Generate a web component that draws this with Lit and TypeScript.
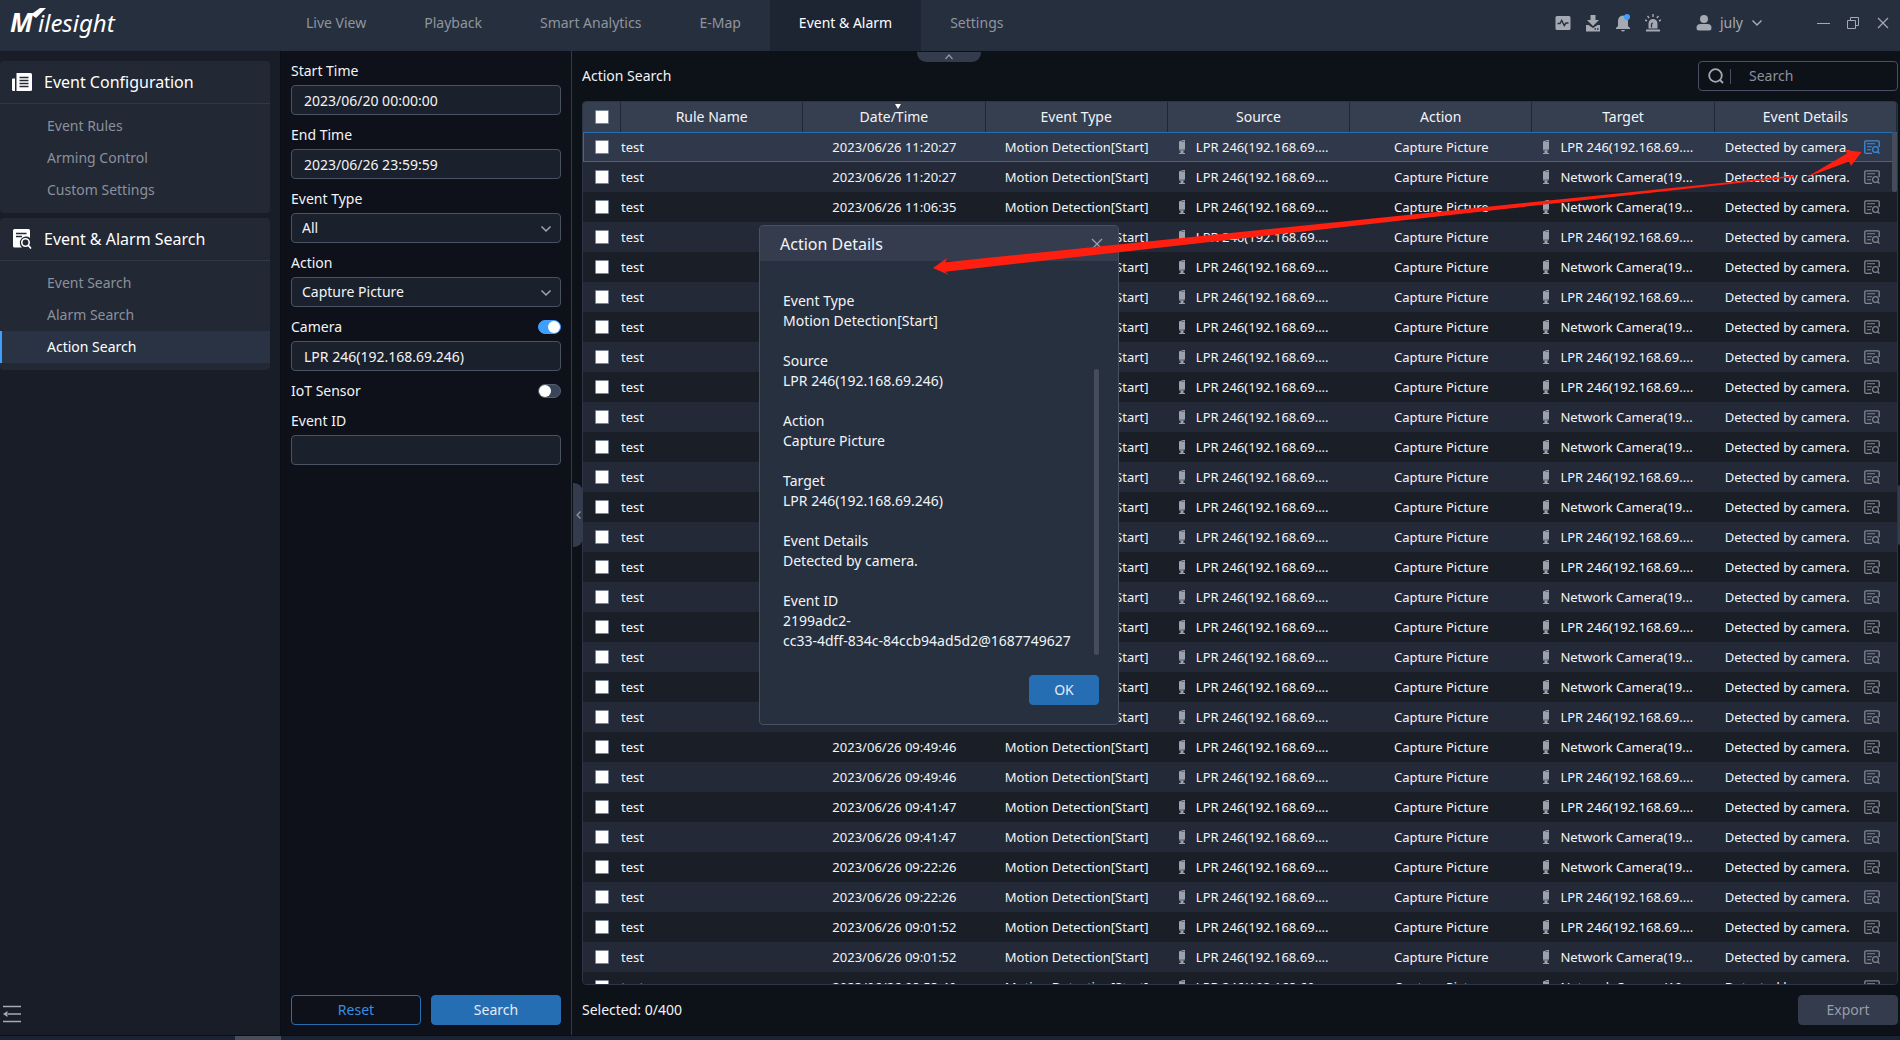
import { LitElement, html, css, svg, nothing } from "lit";
import { customElement, state } from "lit/decorators.js";
import { classMap } from "lit/directives/class-map.js";

interface ActionRow {
  time: string;
  target: string;
}

const LPR = "LPR 246(192.168.69....";
const NET = "Network Camera(19...";

const TIMES = [
  "11:20:27", "11:20:27", "11:06:35", "11:06:35", "10:58:12", "10:58:12",
  "10:47:03", "10:47:03", "10:36:41", "10:36:41", "10:29:18", "10:29:18",
  "10:21:54", "10:21:54", "10:14:30", "10:14:30", "10:05:22", "10:05:22",
  "09:57:09", "09:57:09", "09:49:46", "09:49:46", "09:41:47", "09:41:47",
  "09:22:26", "09:22:26", "09:01:52", "09:01:52", "08:53:49",
];

const TARGETS = "LNNLNLNLLNNLNLLNLNNLNLLNNLLNN";

const ROWS: ActionRow[] = TIMES.map((t, i) => ({
  time: `2023/06/26 ${t}`,
  target: TARGETS[i] === "L" ? LPR : NET,
}));

const NAV = ["Live View", "Playback", "Smart Analytics", "E-Map", "Event & Alarm", "Settings"];
const COLUMNS = ["Rule Name", "Date/Time", "Event Type", "Source", "Action", "Target", "Event Details"];

const DETAILS: [string, string[]][] = [
  ["Event Type", ["Motion Detection[Start]"]],
  ["Source", ["LPR 246(192.168.69.246)"]],
  ["Action", ["Capture Picture"]],
  ["Target", ["LPR 246(192.168.69.246)"]],
  ["Event Details", ["Detected by camera."]],
  ["Event ID", ["2199adc2-", "cc33-4dff-834c-84ccb94ad5d2@1687749627"]],
];

const chevronDown = html`<svg class="chevron" width="12" height="8" viewBox="0 0 12 8">
  <path d="M1.5 1.5 6 6l4.5-4.5" fill="none" stroke="currentColor" stroke-width="1.5" />
</svg>`;

const cameraIcon = html`<svg class="cam" width="8" height="16" viewBox="0 0 8 16">
  <path d="M1 2.5 5 1h2v9.5l-1.5.8V14H7v1H1v-1h1.5v-2.5H1z" fill="#9ba1ad" />
  <path d="M3.5 2.5h3M1 11h6" stroke="#5c6473" stroke-width="1" />
</svg>`;

const detailIcon = html`<svg width="16" height="14" viewBox="0 0 16 14" fill="none" stroke="currentColor">
  <path d="M8 13.3H1.8a1 1 0 0 1-1-1V1.8a1 1 0 0 1 1-1h12.4a1 1 0 0 1 1 1V7" stroke-width="1.3" />
  <path d="M3 3.8h8M3 6.8h5M3 9.8h4" stroke-width="1.1" />
  <circle cx="11.5" cy="9.5" r="2.9" stroke-width="1.2" />
  <path d="m13.6 11.6 1.9 1.9" stroke-width="1.3" />
</svg>`;

@customElement("app-root")
export class AppRoot extends LitElement {
  @state() private selected = 0;
  @state() private dialogOpen = true;

  static styles = css`
    :host {
      display: flex;
      flex-direction: column;
      height: 100vh;
      overflow: hidden;
      position: relative;
      background: #0d1118;
      color: #f2f4f7;
      font: 14px/20px "Noto Sans", "Open Sans", sans-serif;
    }
    *, *::before, *::after { box-sizing: border-box; }
    button, input, select { font: inherit; color: inherit; margin: 0; }
    button { border: 0; background: none; padding: 0; cursor: pointer; }
    a { color: inherit; text-decoration: none; }
    svg { display: block; flex: none; }

    .topbar { display: flex; height: 51px; flex: none; background: #262f3d; color: #8f959f; }
    .logo { width: 277px; padding: 2px 0 0 4px; flex: none; }
    .nav { display: flex; flex: 1; }
    .tab { display: flex; align-items: center; padding: 0 29px 5px; }
    .tab.on { background: #1e2532; color: #fff; }
    .tools { display: flex; align-items: center; gap: 14px; padding: 0 9px 5px 0; color: #a4a9b4; }
    .user { display: flex; align-items: center; gap: 8px; margin: 0 40px 0 21px; }

    .page {
      display: grid; grid-template-columns: 280px 292px minmax(0, 1fr); grid-template-rows: minmax(0, 1fr);
      flex: 1; min-height: 0;
    }
    .strip { display: flex; height: 5px; flex: none; background: #1a2333; border-top: 1px solid #0a0d13; }
    .strip i { width: 46px; margin-left: 235px; background: #474d5b; }

    .side { display: flex; flex-direction: column; gap: 5px; padding: 10px 10px 12px 0; background: #191d27; }
    .group { background: #222834; border-radius: 4px; padding-bottom: 7px; }
    .group h2 {
      display: flex; align-items: center; gap: 12px; height: 43px; margin: 0 0 6px;
      padding-left: 12px; border-bottom: 1px solid #2e3a4a; font-size: 16px; font-weight: 400; color: #fff;
    }
    .item { display: flex; align-items: center; height: 32px; padding-left: 47px; color: #8b919c; }
    .item.on { background: #2a3344; color: #fff; box-shadow: inset 2px 0 #409eff; }
    .fold { margin: auto auto 0 3px; color: #a4a9b4; }

    .filter {
      display: flex; flex-direction: column; gap: 10px; padding: 10px;
      background: #0e1119; border-left: 1px solid #0a0d12; border-right: 1px solid #323a49;
    }
    .field { display: flex; flex-direction: column; gap: 4px; }
    .line { display: flex; align-items: center; justify-content: space-between; height: 20px; }
    .box {
      width: 100%; height: 30px; padding: 0 12px; background: #1b212c;
      border: 1px solid #4a5162; border-radius: 4px; outline: 0;
    }
    .pick { position: relative; }
    .pick .box { appearance: none; padding: 0 10px; }
    .pick .chevron { position: absolute; right: 9px; top: 12px; color: #a0a6b1; pointer-events: none; }
    .switch {
      appearance: none; width: 23px; height: 14px; border-radius: 7px; background: #3b455a;
      border: 1px solid #566073; display: flex; cursor: pointer;
    }
    .switch::before { content: ""; width: 12px; height: 12px; border-radius: 50%; background: #fff; }
    .switch:checked { background: #409eff; border-color: #409eff; justify-content: flex-end; }
    .actions { display: flex; gap: 10px; margin-top: auto; }
    .btn {
      flex: 1; height: 30px; border: 1px solid #266eb4; border-radius: 4px; background: #266eb4; color: #e4ecf5;
    }
    .btn.ghost { background: none; color: #3a8ee0; }
    .btn.off { flex: none; width: 100px; background: #333b4c; border-color: #333b4c; color: #979daa; }

    .main { display: flex; flex-direction: column; gap: 10px; padding: 10px 2px 10px 10px; min-width: 0; position: relative; }
    .bar { display: flex; align-items: center; justify-content: space-between; height: 30px; flex: none; }
    .bar h1 { margin: 0; font-size: 14px; font-weight: 400; }
    .find {
      display: flex; align-items: center; width: 200px; height: 30px; padding-left: 9px;
      border: 1px solid #4a5064; border-radius: 4px; color: #a4a9b4;
    }
    .find input { width: 120px; height: 20px; margin-left: 6px; padding: 0 0 0 12px; border: 0; background: none; outline: 0; }
    .find i { width: 1px; height: 15px; margin-left: 6px; background: #4a5064; }
    .find ::placeholder { color: #8b919c; opacity: 1; }

    .grid {
      flex: 1; min-height: 0; overflow: hidden; position: relative;
      border: 1px solid #2c3545; border-radius: 4px;
    }
    table { width: 100%; table-layout: fixed; border-collapse: separate; border-spacing: 0; font-size: 13px; }
    .c-check { width: 38px; }
    th { height: 30px; padding: 0; background: #363f50; border-right: 1px solid #202837; font-size: 14px; font-weight: 400; position: relative; }
    .sort { position: absolute; left: 50%; top: 2px; margin-left: 1px; }
    td { height: 30px; padding: 0; text-align: center; white-space: nowrap; overflow: hidden; }
    tbody tr { background: #232937; }
    tbody tr:nth-child(odd) { background: #1a1f27; }
    tbody tr.sel { background: #30384b; outline: 1px solid #266eb4; outline-offset: -1px; }
    td.name { text-align: left; }
    .with-icon { display: flex; align-items: center; gap: 10px; padding-left: 10px; }
    .det { display: flex; align-items: center; justify-content: space-between; padding: 0 17px 0 10px; }
    .det button { color: #7f8694; }
    .sel .det button { color: #3a8ee0; }
    .tick {
      appearance: none; display: block; width: 14px; height: 14px; margin: 0 auto 0 12px;
      background: #fff; border: 1px solid #7c8699; border-radius: 1px;
    }
    .tick:checked { background: #409eff; }
    .thumb { position: absolute; right: 0; top: 30px; width: 5px; height: 60px; border-radius: 2px; background: #454c5b; }
    .foot { display: flex; align-items: center; justify-content: space-between; flex: none; }

    .pull { position: absolute; display: flex; align-items: center; justify-content: center; background: #333b4c; color: #9299a6; }
    .pull.top { left: 345px; top: 1px; width: 64px; height: 10px; border-radius: 0 0 9px 9px; }
    .pull.left { left: 1px; top: 432px; width: 10px; height: 64px; border-radius: 0 9px 9px 0; }
    .pull.right { right: 0; top: 434px; width: 2px; height: 60px; border-radius: 2px 0 0 2px; }

    .dialog {
      position: absolute; left: 759px; top: 225px; width: 360px; height: 500px;
      display: flex; flex-direction: column; background: #27303e; border: 1px solid #485061;
      border-radius: 4px; overflow: hidden;
    }
    .dialog header {
      display: flex; align-items: center; justify-content: space-between; height: 35px; flex: none;
      padding: 0 15px 0 20px; background: #343c4e; font-size: 16px;
    }
    .dialog header button { color: #9aa1ae; }
    .body { display: flex; justify-content: space-between; flex: 1; min-height: 0; padding: 30px 19px 0 23px; }
    dl { margin: 0; white-space: nowrap; }
    dd { margin: 0 0 20px; }
    dd:last-child { margin-bottom: 0; }
    dd span { display: block; }
    .body i { width: 5px; height: 286px; margin-top: auto; border-radius: 2px; background: #454c5b; }
    .dialog footer { display: flex; justify-content: flex-end; flex: none; padding: 20px 19px 19px; }
    .dialog .btn { flex: none; width: 70px; }
    .arrow { position: absolute; left: 0; top: 0; pointer-events: none; }
  `;

  private renderTop() {
    return html`<header class="topbar">
      <div class="logo">
        <svg width="130" height="44" viewBox="4 2 130 44" fill="#fff" role="img" aria-label="Milesight">
          <text x="10" y="32" font-family="Noto Sans" font-style="italic" font-weight="700" font-size="26">M</text>
          <text x="38" y="32" font-family="Noto Sans" font-style="italic" font-size="24">ilesight</text>
          <path d="M46 8h-6l-9 6.500 5 3.500z" />
        </svg>
      </div>
      <nav class="nav">
        ${NAV.map((n) => html`<a href="#" class=${classMap({ tab: true, on: n === "Event & Alarm" })}>${n}</a>`)}
      </nav>
      <div class="tools">
        <button aria-label="Status"><svg width="16" height="18" viewBox="0 0 16 18">
          <rect x=".5" y="2" width="15" height="14" rx="1.5" fill="currentColor" />
          <path d="M2.5 9.5H5l1.7-3 2.6 5 1.6-2.5h2.6" fill="none" stroke="#262f3d" stroke-width="1.4" />
        </svg></button>
        <button aria-label="Downloads"><svg width="16" height="18" viewBox="0 0 16 18" fill="currentColor">
          <path d="M5.500 1h5v5H14l-6 6-6-6h3.500z" />
          <path d="M1 11h2.500l4.500 3 4.500-3H15v6.500H1z" />
          <path d="M9.500 15h1.500M12 15h1.500" stroke="#262f3d" stroke-width="1.400" />
        </svg></button>
        <button aria-label="Notifications"><svg width="16" height="18" viewBox="0 0 16 18" fill="currentColor">
          <path d="M8 1.500c3.300.3 5 2.500 5 5.500v5l2 2v1H1v-1l2-2V7c0-3 1.700-5.200 5-5.500zM6 16h4q-.5 1.500-2 1.500T6 16z" />
          <circle cx="12" cy="3" r="3" fill="#409eff" />
        </svg></button>
        <button aria-label="Alarms"><svg width="16" height="18" viewBox="0 0 16 18" fill="currentColor">
          <path d="M3.500 14.500v-5a4.500 4.500 0 0 1 9 0v5zM1 15.500h14v2H1z" />
          <path d="M8 0v3M2.500 2l1.700 2M13.500 2l-1.700 2M0 6l2 1M16 6l-2 1" stroke="currentColor" stroke-width="1.400" />
          <path d="M6.500 13.500v-3q0-1.500 1.500-1.500" fill="none" stroke="#262f3d" stroke-width="1.200" />
        </svg></button>
        <button class="user"><svg width="16" height="18" viewBox="0 0 16 18" fill="currentColor">
            <circle cx="8" cy="5" r="4" />
            <path d="M.5 14q0-4 4-4h7q4 0 4 4 0 2.500-2 2.500H2.500Q.5 16.500.5 14z" />
          </svg>july ${chevronDown}</button>
        <button aria-label="Minimise"><svg width="14" height="14" viewBox="0 0 14 14"><path d="M0 7.500h13" stroke="currentColor" /></svg></button>
        <button aria-label="Restore"><svg width="16" height="14" viewBox="0 0 16 14" fill="none" stroke="currentColor">
          <path d="M2.500 4.500h8v8h-8zM5.500 4V1.500h8v8H11" />
        </svg></button>
        <button aria-label="Close"><svg width="16" height="14" viewBox="0 0 16 14"><path d="m3 2 10 10M13 2 3 12" stroke="currentColor" stroke-width="1.200" /></svg></button>
      </div>
    </header>`;
  }

  private renderGroup(title: string, icon: unknown, items: string[]) {
    return html`<section class="group">
      <h2>${icon}${title}</h2>
      ${items.map((n) => html`<a href="#" class=${classMap({ item: true, on: n === "Action Search" })}>${n}</a>`)}
    </section>`;
  }

  private renderSide() {
    const config = html`<svg width="20" height="20" viewBox="0 0 20 20" fill="#fff">
      <path d="M0 7.500q0-1 1-1h2V19H1.500Q0 19 0 17.500z" />
      <path d="M4.500 1h14q1.500 0 1.500 1.500v15q0 1.500-1.500 1.500h-14z" />
      <path d="M7.500 5.500h9M7.500 8.500h9M7.500 11.500h9M7.500 14.500h9" stroke="#222834" stroke-width="1.400" />
    </svg>`;
    const search = html`<svg width="20" height="20" viewBox="0 0 20 20">
      <path d="M2.500 0h14q1.500 0 1.500 1.500V9a5.500 5.500 0 0 0-8 9.500H2.500Q1 18.500 1 17V1.500Q1 0 2.500 0z" fill="#fff" />
      <path d="M4 4.500h10.500M4 7.500h6" stroke="#222834" stroke-width="1.400" />
      <circle cx="13.500" cy="13.500" r="3.700" fill="none" stroke="#fff" stroke-width="1.600" />
      <path d="m16 16 3 3.500" stroke="#fff" stroke-width="1.700" />
    </svg>`;
    return html`<aside class="side">
      ${this.renderGroup("Event Configuration", config, ["Event Rules", "Arming Control", "Custom Settings"])}
      ${this.renderGroup("Event & Alarm Search", search, ["Event Search", "Alarm Search", "Action Search"])}
      <button class="fold" aria-label="Collapse menu"><svg width="18" height="18" viewBox="0 0 18 18">
        <path d="M0 1.500h18M5 9h13M0 16.500h18" stroke="currentColor" stroke-width="1.600" /><path d="M0 9l4.500-3v6z" fill="currentColor" />
      </svg></button>
    </aside>`;
  }

  private renderFilter() {
    return html`<form class="filter" @submit=${(e: Event) => e.preventDefault()}>
      <div class="field"><label for="start">Start Time</label><input id="start" class="box" .value=${"2023/06/20 00:00:00"} /></div>
      <div class="field"><label for="end">End Time</label><input id="end" class="box" .value=${"2023/06/26 23:59:59"} /></div>
      <div class="field"><label for="type">Event Type</label>
        <div class="pick"><select id="type" class="box"><option>All</option></select>${chevronDown}</div></div>
      <div class="field"><label for="action">Action</label>
        <div class="pick"><select id="action" class="box"><option>Capture Picture</option></select>${chevronDown}</div></div>
      <div class="field">
        <div class="line"><label for="cam-on">Camera</label><input id="cam-on" class="switch" type="checkbox" checked /></div>
        <input class="box" aria-label="Camera name" .value=${"LPR 246(192.168.69.246)"} />
      </div>
      <div class="line"><label for="iot-on">IoT Sensor</label><input id="iot-on" class="switch" type="checkbox" /></div>
      <div class="field"><label for="eid">Event ID</label><input id="eid" class="box" /></div>
      <div class="actions"><button class="btn ghost" type="reset">Reset</button><button class="btn">Search</button></div>
    </form>`;
  }

  private open(i: number) {
    this.selected = i;
    this.dialogOpen = true;
  }

  private renderTable() {
    return html`<div class="grid">
      <table>
        <colgroup><col class="c-check" />${COLUMNS.map(() => html`<col />`)}</colgroup>
        <thead><tr>
          <th><input class="tick" type="checkbox" aria-label="Select all" /></th>
          ${COLUMNS.map((c) => html`<th>${c}${c === "Date/Time"
            ? html`<svg class="sort" width="6" height="5" viewBox="0 0 6 5"><path d="M0 0h6L3 5z" fill="#fff" /></svg>`
            : nothing}</th>`)}
        </tr></thead>
        <tbody>
          ${ROWS.map((r, i) => html`<tr class=${classMap({ sel: i === this.selected })}>
            <td><input class="tick" type="checkbox" aria-label="Select row" /></td>
            <td class="name">test</td>
            <td>${r.time}</td>
            <td>Motion Detection[Start]</td>
            <td><div class="with-icon">${cameraIcon}${LPR}</div></td>
            <td>Capture Picture</td>
            <td><div class="with-icon">${cameraIcon}${r.target}</div></td>
            <td><div class="det">Detected by camera.<button aria-label="Details" @click=${() => this.open(i)}>${detailIcon}</button></div></td>
          </tr>`)}
        </tbody>
      </table>
      <div class="thumb"></div>
    </div>`;
  }

  private renderDialog() {
    if (!this.dialogOpen) return nothing;
    return html`<section class="dialog" role="dialog" aria-label="Action Details">
      <header>Action Details<button aria-label="Close dialog" @click=${() => (this.dialogOpen = false)}>
        <svg width="12" height="12" viewBox="0 0 12 12"><path d="m1 1 10 10M11 1 1 11" stroke="currentColor" stroke-width="1.300" /></svg>
      </button></header>
      <div class="body">
        <dl>${DETAILS.map(([k, v]) => html`<dt>${k}</dt><dd>${v.map((l) => html`<span>${l}</span>`)}</dd>`)}</dl>
        <i></i>
      </div>
      <footer><button class="btn" @click=${() => (this.dialogOpen = false)}>OK</button></footer>
    </section>`;
  }

  render() {
    return html`
      ${this.renderTop()}
      <div class="page">
        ${this.renderSide()} ${this.renderFilter()}
        <main class="main">
          <div class="bar"><h1>Action Search</h1>
            <div class="find">
              <svg width="16" height="16" viewBox="0 0 16 16" fill="none" stroke="currentColor" stroke-width="1.800">
                <circle cx="7.500" cy="7.500" r="6.300" /><path d="m12 12 3 3" />
              </svg><i></i><input placeholder="Search" aria-label="Search" />
            </div>
          </div>
          ${this.renderTable()}
          <div class="foot"><span>Selected: 0/400</span><button class="btn off">Export</button></div>
          <button class="pull top" aria-label="Hide header"><svg width="8" height="6" viewBox="0 0 8 6"><path d="M.5 5 4 1l3.500 4" fill="none" stroke="currentColor" stroke-width="1.200" /></svg></button>
          <button class="pull left" aria-label="Hide filters"><svg width="5" height="8" viewBox="0 0 5 8"><path d="M4.500.5 1 4l3.500 3.500" fill="none" stroke="currentColor" stroke-width="1.200" /></svg></button>
          <button class="pull right" aria-label="Show panel"></button>
        </main>
      </div>
      <div class="strip"><i></i></div>
      ${this.renderDialog()}
      <svg class="arrow" width="1900" height="300" viewBox="0 0 1900 300">
        ${svg`<path fill="#ff1f10" d="M933 268l14-10-1.500 4.300L1500 205.500l294-30v1.500L1500 209.500 945 271.800l4 3.200z" />
        <path fill="#ff1f10" d="M1806 177.500l41-24-2-3.500 16.500 2L1851 166l-2-4.500z" />`}
      </svg>
    `;
  }
}
